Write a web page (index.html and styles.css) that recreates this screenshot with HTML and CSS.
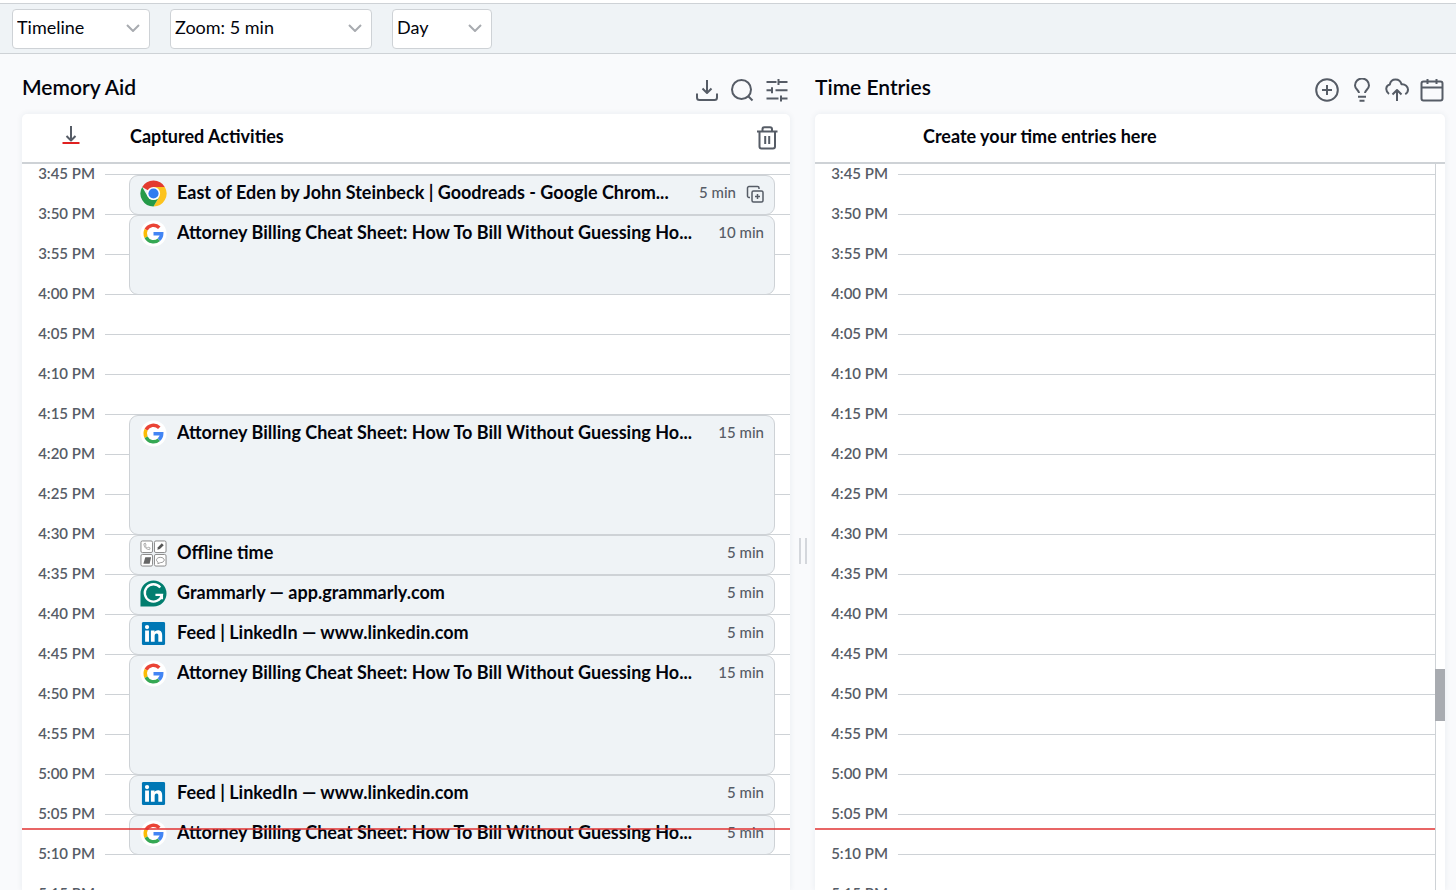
FILE: index.html
```
<!doctype html>
<html lang="en">
  <head>
    <meta charset="utf-8">
    <meta name="viewport" content="width=device-width, initial-scale=1">
    <title>Timeline</title>
    <link rel="stylesheet" href="styles.css">
  </head>
  <body>
    <svg class="sprite" aria-hidden="true">
      <symbol id="chevron" viewBox="0 0 14 8"><path d="M1 1l6 6 6-6"/></symbol>

      <symbol id="google" viewBox="0 0 28 28">
        <circle cx="14" cy="14" r="13.5" fill="#fff"/>
        <g fill="none" stroke-width="3.6">
          <path stroke="#ea4335" d="M6.3 10.2A8.5 8.5 0 0 1 20 8"/>
          <path stroke="#fbbc05" d="M6.3 10.2a8.5 8.5 0 0 0 0 7.6"/>
          <path stroke="#34a853" d="M6.3 17.8A8.5 8.5 0 0 0 19.6 20.4"/>
          <path stroke="#4285f4" d="M14 14.2h8.5a8.5 8.5 0 0 1-2.900 6.200"/>
        </g>
      </symbol>

      <symbol id="linkedin" viewBox="0 0 28 28">
        <rect x="2" y="2" width="24" height="24" rx="1.5" fill="#0077b5"/>
        <circle cx="7.3" cy="7.3" r="2.200" fill="#fff"/>
        <path fill="#fff" d="M5.300 11h4v11.500h-4zM11.300 11h3.800v1.600c.6-1.100 1.900-1.900 3.400-1.900 3.400 0 4.500 2.200 4.500 5.300v6.500h-4v-5.800c0-1.600-.1-2.700-1.700-2.700s-2.100 1.200-2.100 2.700v5.800h-3.900z"/>
      </symbol>
    </svg>

    <header class="toolbar">
      <div class="picker picker-view">
        <select aria-label="View"><option>Timeline</option></select>
        <svg><use href="#chevron"/></svg>
      </div>
      <div class="picker picker-zoom">
        <select aria-label="Zoom"><option>Zoom: 5 min</option></select>
        <svg><use href="#chevron"/></svg>
      </div>
      <div class="picker picker-range">
        <select aria-label="Range"><option>Day</option></select>
        <svg><use href="#chevron"/></svg>
      </div>
    </header>

    <main class="panels">
      <section class="panel">
        <div class="panel-title">
          <h1>Memory Aid</h1>
          <div class="actions">
            <button type="button" aria-label="Download">
              <svg viewBox="0 0 24 24"><path d="M12 2v13M7.500 10.500 12 15l4.500-4.500M2 15.500v4A2.500 2.500 0 0 0 4.500 22h15a2.500 2.500 0 0 0 2.500-2.500v-4"/></svg>
            </button>
            <button type="button" aria-label="Search">
              <svg viewBox="0 0 24 24"><circle cx="11.500" cy="11.500" r="9.500"/><path d="M18.500 18.500l4 4"/></svg>
            </button>
            <button type="button" aria-label="Filter">
              <svg viewBox="0 0 24 24"><path d="M1.500 4h10M13.500 1v6M13.500 4h9M1.500 12.200h5.500M7 9.200v6M10.500 12.200h12M1.500 20.500h12M16 17.500v6M16 20.500h6.500"/></svg>
            </button>
          </div>
        </div>

        <div class="card">
          <div class="card-head">
            <button type="button" class="jump" aria-label="Jump to now">
              <svg viewBox="0 0 20 20"><path d="M10 1v14M5.500 11 10 15.500 14.500 11"/><path class="red" d="M1.500 18h17"/></svg>
            </button>
            <h2>Captured Activities</h2>
            <button type="button" aria-label="Delete">
              <svg viewBox="0 0 24 24"><path d="M2 5.500h20.500M4.500 5.500v15a2 2 0 0 0 2 2h11.500a2 2 0 0 0 2-2v-15M7.500 5.500V3.200a2 2 0 0 1 2-2h5.500a2 2 0 0 1 2 2v2.300M10.200 10v8M14.200 10v8"/></svg>
            </button>
          </div>

          <div class="timeline">
            <div class="grid">
              <div class="slots"></div>
              <div class="events">
                <article class="event">
                  <svg viewBox="0 0 28 28">
                    <path fill="#e33b2e" d="M14 14 2.300 7.200a13.500 13.500 0 0 1 23.400 0z"/>
                    <path fill="#fcc31e" d="M14 14V7.200h11.700A13.500 13.500 0 0 1 14 27.500l5.800-10z"/>
                    <path fill="#249a48" d="M2.300 7.200 8.100 17.400 14 20.800l5.800-3.300-5.800 10A13.500 13.500 0 0 1 2.300 7.200z"/>
                    <circle cx="14" cy="14" r="6.800" fill="#fff"/>
                    <circle cx="14" cy="14" r="5.300" fill="#2f7cf0"/>
                  </svg>
                  <h3>East of Eden by John Steinbeck | Goodreads - Google Chrom...</h3>
                  <span class="duration">5 min</span>
                  <button type="button" class="copy" aria-label="Duplicate">
                    <svg viewBox="0 0 18 18"><rect x="6" y="6" width="11" height="11" rx="1.500"/><path d="M11.500 9v5M9 11.500h5M4 12.500H3A1.500 1.500 0 0 1 1.500 11V3A1.500 1.500 0 0 1 3 1.500h8.500A1.500 1.500 0 0 1 13 3v1"/></svg>
                  </button>
                </article>
                <article class="event min-10">
                  <svg><use href="#google"/></svg>
                  <h3>Attorney Billing Cheat Sheet: How To Bill Without Guessing Ho...</h3>
                  <span class="duration">10 min</span>
                </article>
                <article class="event min-15 after-break">
                  <svg><use href="#google"/></svg>
                  <h3>Attorney Billing Cheat Sheet: How To Bill Without Guessing Ho...</h3>
                  <span class="duration">15 min</span>
                </article>
                <article class="event">
                  <svg viewBox="0 0 28 28">
                    <g fill="#fff" stroke="#858585">
                      <rect x="1" y="1" width="12" height="12" rx="1.500"/>
                      <rect x="15" y="1" width="12" height="12" rx="1.500"/>
                      <rect x="1" y="15" width="12" height="12" rx="1.500"/>
                      <rect x="15" y="15" width="12" height="12" rx="1.500"/>
                    </g>
                    <path fill="none" stroke="#aaa" d="M4 4c0 3.500 2.500 6 6 6l.5-1.800-2-.7-1 .8-2-2 .8-1-.7-2z"/>
                    <path fill="#555" d="m18 10 .6-2.600 4-4 2 2-4 4z"/>
                    <path fill="#666" d="M5.500 18h6l-1.500 6.500H3.500z"/>
                    <path fill="none" stroke="#999" d="M21 18c5.500 0 5.500 5.500 0 5.500l-2.500 1.200.3-1.700c-3-1.500-1.800-5 2.200-5z"/>
                  </svg>
                  <h3>Offline time</h3>
                  <span class="duration">5 min</span>
                </article>
                <article class="event">
                  <svg viewBox="0 0 28 28">
                    <path fill="#027e6f" d="M.5 27.500V14A13.500 13.500 0 1 1 14 27.500z"/>
                    <path fill="none" stroke="#fff" stroke-width="2.400" d="M21 7.800A9 9 0 1 0 22.700 15.500H16M22.700 15.500V20"/>
                  </svg>
                  <h3>Grammarly — app.grammarly.com</h3>
                  <span class="duration">5 min</span>
                </article>
                <article class="event">
                  <svg><use href="#linkedin"/></svg>
                  <h3>Feed | LinkedIn — www.linkedin.com</h3>
                  <span class="duration">5 min</span>
                </article>
                <article class="event min-15">
                  <svg><use href="#google"/></svg>
                  <h3>Attorney Billing Cheat Sheet: How To Bill Without Guessing Ho...</h3>
                  <span class="duration">15 min</span>
                </article>
                <article class="event">
                  <svg><use href="#linkedin"/></svg>
                  <h3>Feed | LinkedIn — www.linkedin.com</h3>
                  <span class="duration">5 min</span>
                </article>
                <article class="event">
                  <svg><use href="#google"/></svg>
                  <h3>Attorney Billing Cheat Sheet: How To Bill Without Guessing Ho...</h3>
                  <span class="duration">5 min</span>
                </article>
              </div>
              <div class="now"></div>
            </div>
          </div>
        </div>
      </section>

      <div class="splitter" role="separator" aria-orientation="vertical"></div>

      <section class="panel">
        <div class="panel-title">
          <h1>Time Entries</h1>
          <div class="actions">
            <button type="button" aria-label="Add entry">
              <svg viewBox="0 0 24 24"><circle cx="12" cy="12" r="10.800"/><path d="M12 7v10M7 12h10"/></svg>
            </button>
            <button type="button" aria-label="Suggestions">
              <svg viewBox="0 0 24 24"><path d="M9 15c0-2.700-4-4-4-7.500a7 7 0 0 1 14 0C19 11 15 12.300 15 15M8 18.700h8M9.500 22.700h5"/></svg>
            </button>
            <button type="button" aria-label="Upload">
              <svg viewBox="0 0 24 24"><path d="M4 16C0 13 .5 7.500 4.800 6.500 5.500 3 8 1.500 10.500 1.500c3 0 5.300 1.800 6 4.800 3.800-.3 6.500 2.200 6.500 5.200 0 2-1 3.800-2.800 4.700M12 23V12M7.500 16.500 12 12l4.500 4.500"/></svg>
            </button>
            <button type="button" aria-label="Calendar">
              <svg viewBox="0 0 24 24"><rect x="1.500" y="3.500" width="21" height="19" rx="2"/><path d="M1.500 9.500h21M7.500 1v5M16.500 1v5"/></svg>
            </button>
          </div>
        </div>

        <div class="card">
          <div class="card-head">
            <span class="jump"></span>
            <h2>Create your time entries here</h2>
          </div>
          <div class="timeline">
            <div class="grid">
              <div class="slots"></div>
              <div class="now"></div>
            </div>
            <div class="scrollbar"><div class="thumb"></div></div>
          </div>
        </div>
      </section>
    </main>

    <script>
      var START = 15 * 60 + 45;
      var STEP = 5;
      var COUNT = 19;

      function formatTime(minutes) {
        var hour = Math.floor(minutes / 60);
        var min = minutes % 60;
        return (hour % 12 || 12) + ':' + (min < 10 ? '0' : '') + min + (hour < 12 ? ' AM' : ' PM');
      }

      var lists = document.querySelectorAll('.slots');
      for (var i = 0; i < lists.length; i++) {
        for (var n = 0; n < COUNT; n++) {
          var slot = document.createElement('div');
          var time = document.createElement('time');
          slot.className = 'slot';
          time.textContent = formatTime(START + n * STEP);
          slot.appendChild(time);
          lists[i].appendChild(slot);
        }
      }
    </script>
  </body>
</html>
```
FILE: styles.css
```
*, *:before, *:after {
  box-sizing: border-box;
}

body {
  background: #f9fafc;
  border-top: 3px solid #fff;
  color: #02040c;
  display: flex;
  flex-direction: column;
  font-family: Lato, "Liberation Sans", sans-serif;
  font-size: 18px;
  height: 100vh;
  line-height: 24px;
  margin: 0;
  overflow: hidden;
}

h1, h2, h3 {
  font-weight: 700;
  margin: 0;
}

h1 {
  font-size: 21px;
  font-weight: 600;
}

h2, h3 {
  font-size: 18px;
}

button {
  background: none;
  border: none;
  color: #565c66;
  cursor: pointer;
  display: block;
  padding: 0;
}

button svg {
  display: block;
  fill: none;
  height: 24px;
  stroke: currentColor;
  stroke-linejoin: round;
  stroke-width: 2;
  width: 24px;
}

.sprite {
  display: none;
}

.toolbar {
  background: #eff3f6;
  border: 1px solid #ced2d6;
  border-width: 1px 0;
  display: flex;
  gap: 20px;
  padding: 5px 12px 4px;
}

.picker {
  display: grid;
}

.picker select, .picker svg {
  grid-area: 1 / 1;
}

.picker select {
  -webkit-appearance: none;
  appearance: none;
  background: #fff;
  border: 1px solid #ced2d6;
  border-radius: 4px;
  color: inherit;
  font: inherit;
  height: 40px;
  padding: 0 32px 4px 4px;
}

.picker svg {
  align-self: center;
  fill: none;
  height: 8px;
  justify-self: end;
  margin: 0 10px 2px 0;
  pointer-events: none;
  stroke: #a8abb0;
  stroke-width: 2;
  width: 14px;
}

.picker-view {
  width: 138px;
}

.picker-zoom {
  width: 202px;
}

.picker-range {
  width: 100px;
}

.panels {
  display: grid;
  flex: 1;
  grid-template-columns: 768fr 25px 630fr;
  min-height: 0;
  padding: 0 11px 0 22px;
}

.panel {
  display: flex;
  flex-direction: column;
  min-height: 0;
  min-width: 0;
}

.panel-title {
  align-items: center;
  display: flex;
  height: 60px;
  justify-content: space-between;
  padding-top: 6px;
}

.actions {
  display: flex;
  gap: 11px;
  padding: 6px 1px 0 0;
}

.card {
  background: #fff;
  border-radius: 5px 5px 0 0;
  box-shadow: 0 0 6px rgba(40, 60, 90, 0.08);
  display: flex;
  flex: 1;
  flex-direction: column;
  min-height: 0;
}

.card-head {
  align-items: center;
  border-bottom: 2px solid #ced2d6;
  display: flex;
  height: 50px;
  padding-right: 11px;
}

.card-head h2 {
  flex: 1;
  padding-bottom: 4px;
}

.jump {
  padding: 0 39px 6px;
  width: 108px;
}

.jump svg {
  height: 20px;
  width: 20px;
}

.jump .red {
  stroke: #e02020;
}

.timeline {
  display: flex;
  flex: 1;
  min-height: 0;
  overflow: hidden;
}

.grid {
  flex: 1;
  min-width: 0;
  padding-top: 10px;
  position: relative;
}

.slot {
  display: flex;
  gap: 10px;
  height: 40px;
}

.slot:after {
  border-top: 1px solid #ced2d6;
  content: "";
  flex: 1;
}

.slot time {
  color: #565c66;
  font-size: 15px;
  font-weight: 600;
  line-height: 20px;
  margin-top: -11px;
  text-align: right;
  width: 73px;
}

.events {
  left: 107px;
  position: absolute;
  right: 15px;
  top: 11px;
}

.event {
  align-items: flex-start;
  background: #eff3f6;
  border: 1px solid #ced2d6;
  border-radius: 9px;
  display: flex;
  height: 40px;
  padding: 4px 10px;
}

.min-10 {
  height: 80px;
}

.min-15 {
  height: 120px;
}

.after-break {
  margin-top: 120px;
}

.event > svg {
  flex: none;
  height: 27px;
  width: 27px;
}

.event h3 {
  flex: 1;
  line-height: 24px;
  margin-left: 10px;
  min-width: 0;
  overflow: hidden;
  white-space: nowrap;
}

.duration {
  color: #565c66;
  font-size: 15px;
  font-weight: 500;
  line-height: 24px;
  margin-left: 10px;
}

.copy {
  margin: 5px 0 0 10px;
}

.copy svg {
  height: 18px;
  stroke-width: 1.5;
  width: 18px;
}

.now {
  background: rgba(224, 49, 49, 0.75);
  height: 2px;
  left: 0;
  position: absolute;
  right: 0;
  top: 664px;
}

.splitter {
  align-self: center;
  border: 2px solid #d4d7dc;
  border-width: 0 2px;
  height: 26px;
  justify-self: center;
  margin-top: 158px;
  width: 8px;
}

.scrollbar {
  border-left: 1px solid #ced2d6;
  display: flex;
  width: 10px;
}

.thumb {
  background: #a8abb0;
  flex: 1;
  height: 52px;
  margin: 505px 0 0 -1px;
}
```
